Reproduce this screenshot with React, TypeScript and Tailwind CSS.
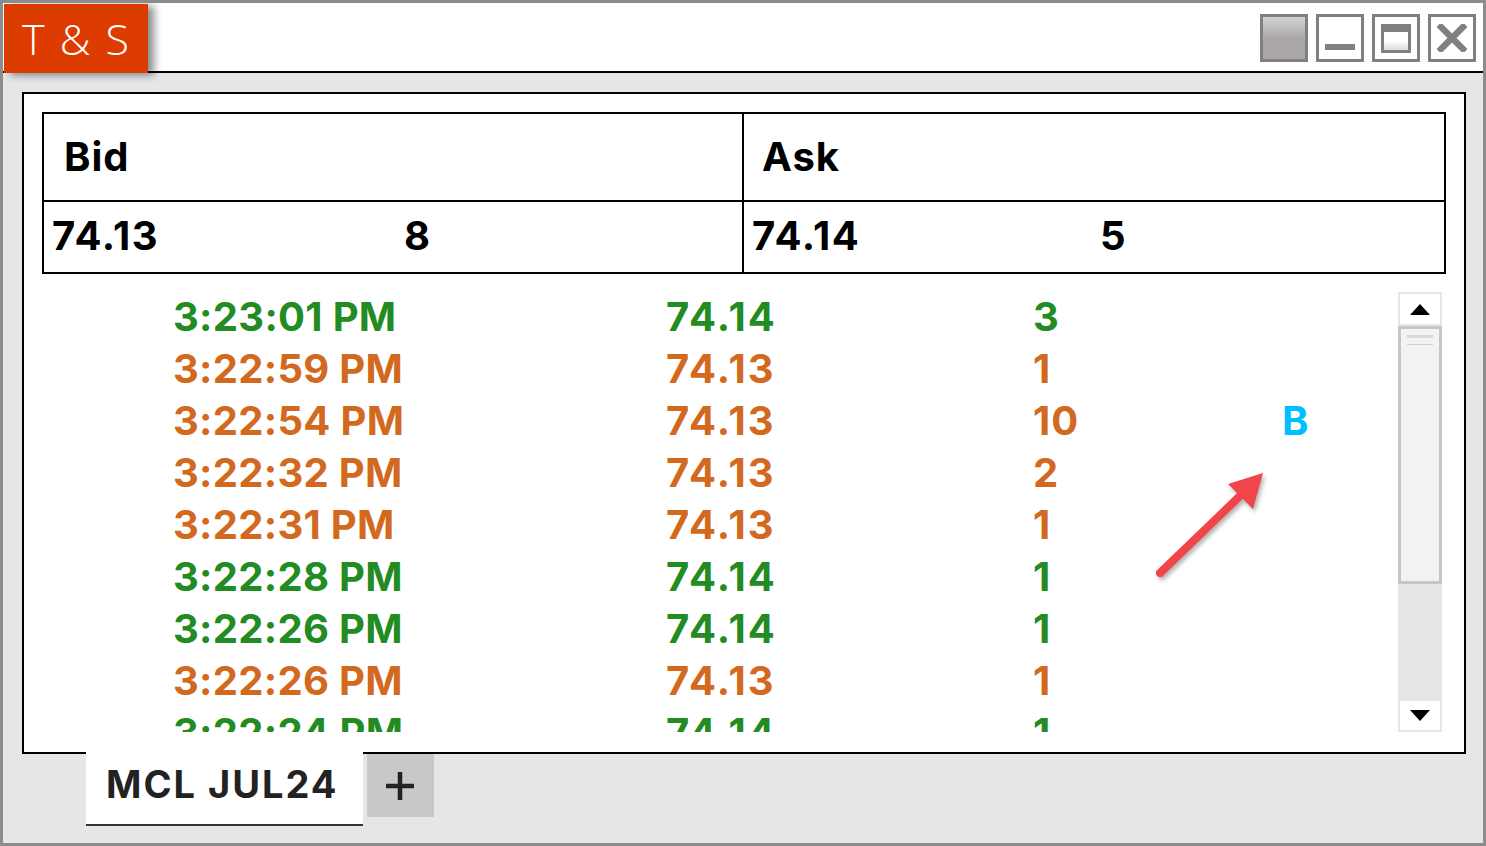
import React from "react";

const GREEN = "text-[#228b22]";
const ORANGE = "text-[#d2691e]";

type Row = { t: string; p: string; s: string; up: boolean; b?: boolean };
const rows: Row[] = [
  { t: "3:23:01 PM", p: "74.14", s: "3", up: true },
  { t: "3:22:59 PM", p: "74.13", s: "1", up: false },
  { t: "3:22:54 PM", p: "74.13", s: "10", up: false, b: true },
  { t: "3:22:32 PM", p: "74.13", s: "2", up: false },
  { t: "3:22:31 PM", p: "74.13", s: "1", up: false },
  { t: "3:22:28 PM", p: "74.14", s: "1", up: true },
  { t: "3:22:26 PM", p: "74.14", s: "1", up: true },
  { t: "3:22:26 PM", p: "74.13", s: "1", up: false },
  { t: "3:22:24 PM", p: "74.14", s: "1", up: true },
];

function WinButtons() {
  return (
    <div className="flex gap-[8px] mt-[11px] mr-[7px]">
      <div className="w-[48px] h-[48px] border-[3px] border-[#808080] bg-gradient-to-b from-[#d4d2d2] via-[#aca8a8] to-[#aaa6a6]" />
      <div className="w-[48px] h-[48px] border-[3px] border-[#808080] bg-white flex items-end justify-center pb-[9px]">
        <div className="w-[30px] h-[6px] bg-[#808080]" />
      </div>
      <div className="w-[48px] h-[48px] border-[3px] border-[#808080] bg-white flex items-center justify-center">
        <div className="w-[30px] h-[29px] border-[3px] border-t-[8px] border-[#808080] bg-gradient-to-b from-white via-white to-[#dcdcdc]" />
      </div>
      <div className="w-[48px] h-[48px] border-[3px] border-[#808080] bg-white flex items-center justify-center">
        <svg width="30" height="28" viewBox="0 0 30 28">
          <path d="M4 3 L26 25 M26 3 L4 25" stroke="#808080" strokeWidth="6.5" strokeLinecap="square" />
        </svg>
      </div>
    </div>
  );
}

function ScrollBar() {
  return (
    <div className="w-[44px] h-[440px] flex flex-col bg-[#e5e5e5]">
      <div className="h-[34px] border-2 border-[#e6e6e6] bg-white flex items-center justify-center">
        <svg width="20" height="11" viewBox="0 0 20 11">
          <path d="M10 0 L20 11 L0 11 Z" fill="#000" />
        </svg>
      </div>
      <div className="h-[258px] border-[3px] border-[#c6c6c6] bg-[#f2f2f2] flex flex-col items-center pt-[6px]">
        <div className="w-[26px] h-[3px] bg-[#d9d9d9]" />
        <div className="w-[26px] h-[1px] bg-[#d0d0d0] mt-[6px]" />
      </div>
      <div className="flex-1" />
      <div className="h-[33px] border-2 border-[#e6e6e6] bg-white flex items-center justify-center">
        <svg width="20" height="11" viewBox="0 0 20 11">
          <path d="M0 0 L20 0 L10 11 Z" fill="#000" />
        </svg>
      </div>
    </div>
  );
}

export default function App() {
  const font = { fontFamily: "Inter, 'Liberation Sans', sans-serif" };
  return (
    <div
      className="relative w-[1486px] h-[846px] border-[3px] border-[#8c8c8c] bg-[#e5e6e8] flex flex-col overflow-hidden"
      style={font}
    >
      {/* Title bar */}
      <div className="h-[70px] bg-white border-b-2 border-black flex items-start justify-between shrink-0">
        <div
          className="relative z-10 mt-[1px] ml-[1px] w-[144px] h-[69px] bg-[#dc3c00] shadow-[6px_2px_8px_rgba(0,0,0,0.45)] flex items-center pl-[18px] text-white text-[43px] font-light tracking-[2px] leading-none"
          style={{ fontFamily: "'Open Sans', 'Noto Sans', sans-serif" }}
        >
          T&nbsp;&amp;&nbsp;S
        </div>
        <WinButtons />
      </div>

      {/* Main panel */}
      <div className="mt-[19px] ml-[19px] mr-[17px] h-[662px] border-2 border-black bg-white flex flex-col shrink-0">
        <div className="mx-[18px] mt-[18px] border-2 border-black font-bold text-black text-[40px]">
          <div className="flex h-[88px] border-b-2 border-black">
            <div className="w-[700px] border-r-2 border-black flex items-center pl-[20px] tracking-[1px]">Bid</div>
            <div className="flex-1 flex items-center pl-[18px] tracking-[1px]">Ask</div>
          </div>
          <div className="flex h-[70px]">
            <div className="w-[700px] border-r-2 border-black flex items-center pl-[8px] -mt-[2px]">
              <span className="w-[352px] tracking-[1.5px]">74.13</span>
              <span>8</span>
            </div>
            <div className="flex-1 flex items-center pl-[8px] -mt-[2px]">
              <span className="w-[348px] tracking-[1.5px]">74.14</span>
              <span>5</span>
            </div>
          </div>
        </div>

        <div className="mt-[18px] h-[440px] flex">
          <div className="flex-1 overflow-hidden">
            <div className="-mt-[1px] font-bold text-[40px]">
              {rows.map((r, i) => (
                <div
                  key={i}
                  className={`flex h-[52px] leading-[52px] whitespace-nowrap ${r.up ? GREEN : ORANGE}`}
                >
                  <span className="w-[642px] pl-[149px] tracking-[0.3px]">{r.t}</span>
                  <span className="w-[367px] tracking-[2px]">{r.p}</span>
                  <span className="w-[251px] tracking-[1px]">{r.s}</span>
                  <span className="text-[#00bfff] -ml-[2px]">{r.b ? "B" : ""}</span>
                </div>
              ))}
            </div>
          </div>
          <div className="mr-[22px]">
            <ScrollBar />
          </div>
        </div>
      </div>

      {/* Tabs */}
      <div className="flex items-start ml-[83px] -mt-[2px] shrink-0">
        <div className="relative z-10 h-[74px] bg-white border-b-2 border-[#333] flex items-center pl-[20px] pr-[24px] pb-[8px] font-bold text-[38px] text-[#222] whitespace-nowrap tracking-[2px]">
          MCL JUL24
        </div>
        <div className="ml-[4px] mt-[2px] w-[67px] h-[63px] bg-[#c8c8c8] flex items-center justify-center">
          <svg width="32" height="32" viewBox="0 0 32 32">
            <path d="M16 2 V30 M2 16 H30" stroke="#222" strokeWidth="4.5" />
          </svg>
        </div>
      </div>

      {/* Annotation arrow */}
      <svg
        className="absolute left-[1137px] top-[457px] drop-shadow-[2px_3px_2px_rgba(0,0,0,0.3)]"
        width="140"
        height="130"
        viewBox="0 0 140 130"
      >
        <line x1="20" y1="113" x2="102" y2="34" stroke="#f2454a" strokeWidth="8" strokeLinecap="round" />
        <path d="M123 13 L88 24 L113 49 Z" fill="#f2454a" />
      </svg>
    </div>
  );
}
